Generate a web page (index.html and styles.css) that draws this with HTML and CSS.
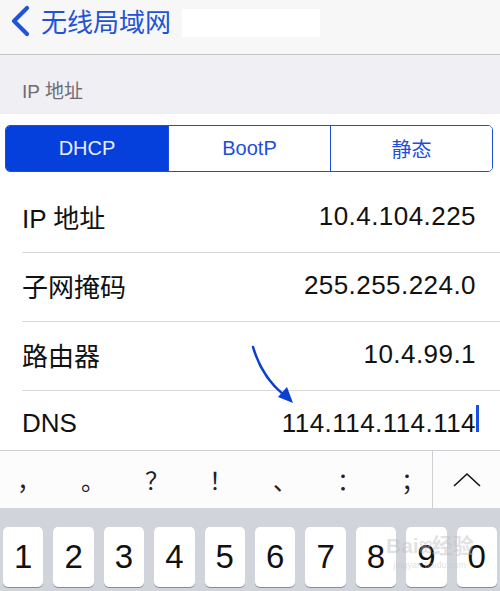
FILE: index.html
```html
<!DOCTYPE html>
<html lang="zh-CN">

<head>
  <meta charset="UTF-8">
  <meta name="viewport" content="width=device-width, initial-scale=1.0">
  <title>IP 地址</title>
  <link rel="stylesheet" href="styles.css">
</head>

<body>
  <div class="screen">
    <header class="navbar">
      <a class="back" href="#">
        <svg class="back-icon" width="22" height="32" viewBox="0 0 22 32">
          <polyline points="18,3 5,16 18,29" fill="none" stroke="currentColor" stroke-width="4.2" stroke-linecap="round" stroke-linejoin="round" />
        </svg>
        <span>无线局域网</span>
      </a>
      <span class="ssid-mask"></span>
    </header>

    <div class="section-title">IP 地址</div>

    <div class="settings">
      <div class="segmented">
        <button class="segment active">DHCP</button>
        <button class="segment">BootP</button>
        <button class="segment">静态</button>
      </div>

      <ul class="fields">
        <li class="field"><span class="label">IP 地址</span><span class="value">10.4.104.225</span></li>
        <li class="field"><span class="label">子网掩码</span><span class="value">255.255.224.0</span></li>
        <li class="field"><span class="label">路由器</span><span class="value">10.4.99.1</span></li>
        <li class="field"><span class="label">DNS</span><span class="value">114.114.114.114<i class="caret"></i></span></li>
      </ul>

      <!-- pointer to the DNS field -->
      <svg class="hint-arrow" width="60" height="70" viewBox="0 0 60 70">
        <path d="M3 10 Q12 40 34 58" fill="none" stroke="#0a3fd4" stroke-width="2.6" stroke-linecap="round" />
        <polygon points="43,66 28,60 37,50" fill="#0a3fd4" />
      </svg>
    </div>

    <div class="keyboard">
      <div class="candidates">
        <div class="cand-list">
          <span class="cand">，</span>
          <span class="cand">。</span>
          <span class="cand">？</span>
          <span class="cand">！</span>
          <span class="cand">、</span>
          <span class="cand">：</span>
          <span class="cand">；</span>
        </div>
        <span class="more">
          <svg width="30" height="16" viewBox="0 0 30 16">
            <polyline points="2,14 15,2 28,14" fill="none" stroke="#111" stroke-width="1.6" />
          </svg>
        </span>
      </div>
      <div class="keys">
        <span class="key">1</span>
        <span class="key">2</span>
        <span class="key">3</span>
        <span class="key">4</span>
        <span class="key">5</span>
        <span class="key">6</span>
        <span class="key">7</span>
        <span class="key">8</span>
        <span class="key">9</span>
        <span class="key">0</span>
      </div>
      <div class="watermark">
        <span class="wm-logo">Bai<b>ꕤ</b>经验</span>
        <span class="wm-url">jingyan.baidu.com</span>
      </div>
    </div>
  </div>
</body>

</html>
```

FILE: styles.css
```css
body {
  margin: 0;
  font-family: "Liberation Sans", Arial, "Noto Sans CJK SC", sans-serif;
  background-color: #fff;
}

.screen {
  position: relative;
  display: flex;
  flex-direction: column;
  width: 500px;
  height: 591px;
  overflow: hidden;
}

/* top navigation */
.navbar {
  display: flex;
  align-items: center;
  height: 54px;
  padding-left: 9px;
  background-color: #f7f7f8;
  border-bottom: 1px solid #c4c4c7;
  flex-shrink: 0;
}

.back {
  display: flex;
  align-items: center;
  color: #2153d6;
  text-decoration: none;
  font-size: 26px;
  margin-top: -13px;
}

.back-icon {
  margin-right: 10px;
}

.ssid-mask {
  width: 138px;
  height: 28px;
  margin-left: 11px;
  margin-top: -8px;
  background-color: #fff;
}

.section-title {
  height: 59px;
  box-sizing: border-box;
  padding: 21px 0 0 22px;
  font-size: 19px;
  color: #6d6d72;
  background-color: #efeff4;
  flex-shrink: 0;
}

/* form area */
.settings {
  position: relative;
  flex: 1;
  min-height: 0;
  overflow: hidden;
}

.segmented {
  display: grid;
  grid-template-columns: repeat(3, 1fr);
  height: 45px;
  margin: 11px 7px 12px 5px;
  border: 1px solid #1b4fdb;
  border-radius: 5px;
  overflow: hidden;
}

.segment {
  font-family: inherit;
  font-size: 20px;
  color: #1d4fd9;
  background-color: #fff;
  border: none;
  border-left: 1px solid #1b4fdb;
  padding: 0;
}

.segment:first-child {
  border-left: none;
}

.segment.active {
  background-color: #0640dc;
  color: #e9eefc;
}

.fields {
  list-style: none;
  margin: 0;
  padding: 0;
}

.field {
  display: flex;
  justify-content: space-between;
  align-items: center;
  height: 69px;
  box-sizing: border-box;
  margin-left: 22px;
  padding: 0 24px 3px 0;
  border-bottom: 1px solid #d9d9dc;
  font-size: 26px;
  color: #111;
}

.value {
  position: relative;
  letter-spacing: 0.45px;
}

.caret {
  position: absolute;
  right: -3px;
  top: -3px;
  width: 3px;
  height: 27px;
  background-color: #1a4fe6;
}

.hint-arrow {
  position: absolute;
  left: 250px;
  top: 223px;
}

/* keyboard */
.keyboard {
  position: relative;
  flex-shrink: 0;
  background-color: #d1d5db;
}

.candidates {
  display: flex;
  height: 57px;
  background-color: #fcfcfc;
  border-top: 1px solid #cfd0d3;
}

.cand-list {
  display: flex;
  width: 432px;
}

.cand {
  flex: 0 0 64px;
  display: flex;
  align-items: center;
  justify-content: center;
  font-family: "Noto Sans CJK SC", sans-serif;
  font-size: 24px;
  color: #222;
}

.cand:first-child {
  margin-left: -3px;
}

.more {
  flex: 1;
  display: flex;
  align-items: center;
  justify-content: center;
  border-left: 1px solid #cfd0d3;
}

.keys {
  display: grid;
  grid-template-columns: repeat(10, 1fr);
  gap: 10px;
  padding: 19px 3px 4px;
}

.key {
  display: flex;
  align-items: center;
  justify-content: center;
  height: 60px;
  background-color: #fff;
  border-radius: 5px;
  box-shadow: 0 1px 0 #8b8c90;
  font-size: 33px;
  color: #111;
}

.watermark {
  position: absolute;
  left: 386px;
  top: 84px;
  display: flex;
  flex-direction: column;
  align-items: center;
  color: rgba(190, 190, 195, 0.45);
  pointer-events: none;
}

.wm-logo {
  font-size: 21px;
  font-weight: bold;
  line-height: 24px;
}

.wm-logo b {
  font-size: 16px;
}

.wm-url {
  font-size: 9px;
}
```
